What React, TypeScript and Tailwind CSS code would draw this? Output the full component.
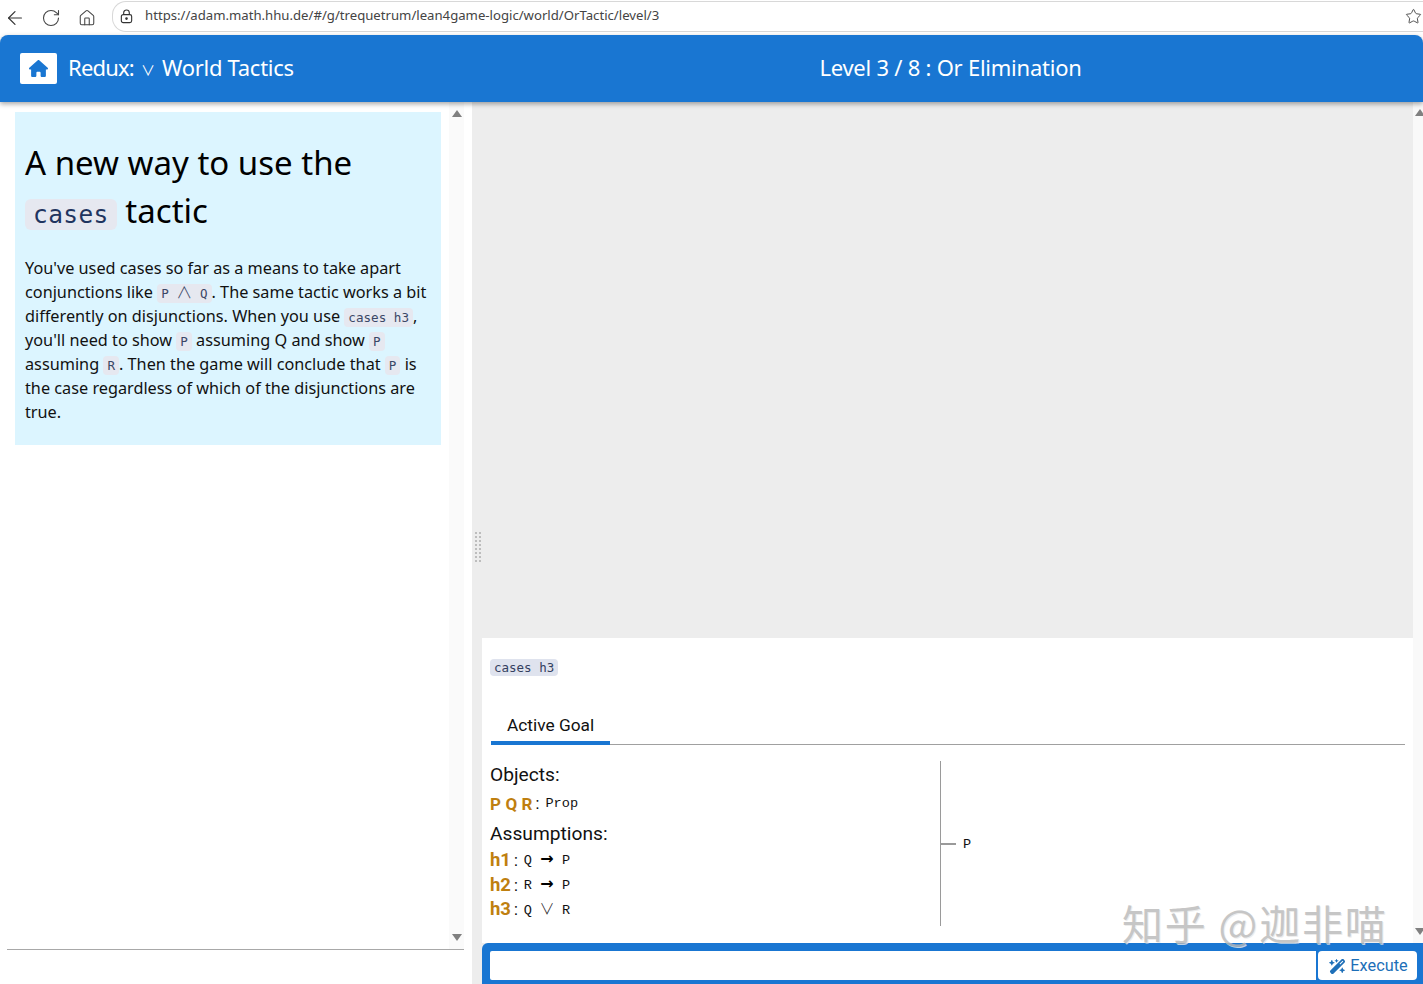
import React from "react";
import { ArrowLeft, RotateCw, Home, Star } from "lucide-react";
import { FaHouse, FaWandMagicSparkles } from "react-icons/fa6";

function Code({ children }: { children: React.ReactNode }) {
  return (
    <code className="bg-[#e6e8f0] text-[#3b4766] rounded-[4px] px-[4px] py-[2px] text-[12.6px] leading-none font-['DejaVu_Sans_Mono',monospace]">
      {children}
    </code>
  );
}

function Arrow() {
  return <span className="inline-block w-[30px] text-center font-bold text-[16px] leading-none font-['DejaVu_Sans',sans-serif] text-black">→</span>;
}
function Or() {
  return <span className="inline-block w-[30px] text-center text-[15px] font-light leading-none font-['Noto_Sans_CJK_SC',sans-serif] text-[#222]">∨</span>;
}

function Hyp({ name, value, wide }: { name: string; value: React.ReactNode; wide?: boolean }) {
  return (
    <div className="flex items-center h-[24.5px]">
      <span className={wide ? "font-bold text-[#bf7f0f] text-[17px] tracking-[0.1px] font-['Roboto',sans-serif]" : "font-bold text-[#bf7f0f] text-[18.5px] font-['Roboto',sans-serif]"}>{name}</span>
      <span className="ml-[3px] mr-[6px] text-[16px] text-black">:</span>
      <span className="font-['Liberation_Mono',monospace] text-[13.6px] text-[#111] whitespace-pre">{value}</span>
    </div>
  );
}

function ArrowUp() {
  return <div className="w-0 h-0 border-x-[5px] border-x-transparent border-b-[7px] border-b-[#808080]" />;
}
function ArrowDown() {
  return <div className="w-0 h-0 border-x-[5px] border-x-transparent border-t-[7px] border-t-[#808080]" />;
}

export default function App() {
  return (
    <div className="relative w-[1423px] h-[984px] overflow-hidden bg-white flex flex-col font-['Noto_Sans',sans-serif] text-[#111]">
      {/* browser bar */}
      <div className="h-[35px] flex items-center bg-white shrink-0">
        <ArrowLeft className="ml-[4px] w-[22px] h-[22px] text-[#333]" strokeWidth={1.3} />
        <RotateCw className="ml-[15px] w-[20px] h-[20px] text-[#444]" strokeWidth={1.3} />
        <Home className="ml-[17px] w-[18px] h-[18px] text-[#444]" strokeWidth={1.4} />
        <div className="ml-[16px] flex-1 h-[31px] -mt-[3px] border border-[#d8d8d8] rounded-l-[14px] border-r-0 flex items-center pl-[6px] pr-[1px]">
          <svg viewBox="0 0 16 16" className="w-[15px] h-[15px] text-[#333]" fill="none" stroke="currentColor" strokeWidth="1.2">
            <rect x="2.5" y="6" width="11" height="8.5" rx="2" />
            <path d="M5 6V4a3 3 0 0 1 6 0v2" />
            <circle cx="8" cy="10.2" r="0.8" fill="currentColor" />
          </svg>
          <span className="ml-[11px] text-[13.16px] text-[#444] whitespace-nowrap">
            https://adam.math.hhu.de/#/g/trequetrum/lean4game-logic/world/OrTactic/level/3
          </span>
          <Star className="ml-auto w-[17px] h-[17px] text-[#444]" strokeWidth={1.3} />
        </div>
      </div>

      {/* header */}
      <header className="relative z-10 h-[67px] shrink-0 bg-[#1976d2] rounded-t-[8px] shadow-[0_2px_5px_rgba(0,0,0,0.35)] flex items-center text-white">
        <div className="w-[473px] shrink-0 flex items-center pl-[20px]">
          <div className="w-[37px] h-[31px] bg-white rounded-[2px] flex items-center justify-center text-[#1976d2]">
            <FaHouse className="w-[19px] h-[17px]" />
          </div>
          <span className="ml-[11px] -mt-[2px] text-[22px] tracking-[-0.8px] whitespace-nowrap">Redux:</span>
          <span className="ml-[7px] w-[14px] text-center text-[14px] font-normal font-['Noto_Sans_CJK_SC',sans-serif] leading-none whitespace-nowrap">∨</span>
          <span className="ml-[7px] -mt-[2px] text-[22px] tracking-[-0.28px] whitespace-nowrap">World Tactics</span>
        </div>
        <div className="flex-1 text-center text-[22px] tracking-[-0.24px] whitespace-nowrap -mt-[2px] ml-[5px]">Level 3 / 8 : Or Elimination</div>
      </header>

      {/* body */}
      <div className="flex-1 flex min-h-0">
        {/* left */}
        <div className="w-[472px] shrink-0 flex flex-col">
          <div className="h-[848px] ml-[7px] mr-[8px] shrink-0 border-b border-[#a8a8a8] flex">
            <div className="flex-1 pl-[8px] pt-[10px]">
              <div className="bg-[#dcf5ff] w-[426px] h-[333px] px-[10px] pt-[27px]">
                <h1 className="text-[33px] leading-[48px] text-black">
                  A new way to use the
                  <br />
                  <code className="bg-[#e6e8f0] text-[#1f3560] rounded-[6px] px-[8px] py-[1px] text-[24.5px] leading-none tracking-[0.4px] font-['DejaVu_Sans_Mono',monospace]">cases</code>{" "}
                  tactic
                </h1>
                <p className="mt-[21px] text-[16.25px] leading-[24px] text-[#111]">
                  You've used cases so far as a means to take apart conjunctions like <Code>P <span className="font-['Noto_Sans_CJK_SC',sans-serif] font-light text-[16px] leading-none">∧</span> Q</Code>. The same tactic
                  works a bit differently on disjunctions. When you use <Code>cases h3</Code>, you'll need to show <Code>P</Code> assuming Q and show <Code>P</Code> assuming <Code>R</Code>. Then the game will conclude that <Code>P</Code> is the case regardless of which of the disjunctions are true.
                </p>
              </div>
            </div>
            <div className="w-[15px] bg-[#fafafa] flex flex-col items-center justify-between pt-[8px] pb-[8px] shrink-0">
              <ArrowUp />
              <ArrowDown />
            </div>
          </div>
        </div>

        {/* right */}
        <div className="flex-1 flex flex-col min-w-0 bg-[#ededed]">
          <div className="flex-1 flex min-h-0">
            <div className="flex-1 flex flex-col min-w-0">
              <div className="relative h-[536px] shrink-0">
                <div className="absolute left-[2px] top-[429px] w-[8px] h-[32px] bg-[radial-gradient(circle,#bdbdbd_1.2px,transparent_1.3px)] bg-[length:4px_4px]" />
              </div>
              <div className="flex-1 ml-[10px] bg-white px-[8px] pt-[16px] flex flex-col">
                <div>
                  <code className="bg-[#dfe3ee] text-[#33405f] rounded-[4px] px-[4px] py-[1px] text-[12.5px] font-['DejaVu_Sans_Mono',monospace]">cases h3</code>
                </div>
                <div className="mt-[35px] ml-[1px] w-[914px] border-b border-[#a0a0a0] h-[32px] flex">
                  <div className="w-[119px] h-[32px] border-b-[4px] border-[#1976d2] pl-[16px] text-[17.3px] leading-[24px] font-['Roboto',sans-serif] text-[#111]">Active Goal</div>
                </div>
                <div className="flex mt-[16px] h-[165px]">
                  <div className="w-[451px] shrink-0 border-r border-[#9a9a9a] pt-[1px] font-['Roboto',sans-serif]">
                    <div className="text-[19.2px] leading-[26px]">Objects:</div>
                    <div className="mt-[4px]">
                      <Hyp wide name="P Q R" value="Prop" />
                    </div>
                    <div className="text-[19.2px] leading-[26px] mt-[4px]">Assumptions:</div>
                    <div className="mt-[2.5px]">
                      <Hyp name="h1" value={<>Q<Arrow />P</>} />
                      <Hyp name="h2" value={<>R<Arrow />P</>} />
                      <Hyp name="h3" value={<>Q<Or />R</>} />
                    </div>
                  </div>
                  <div className="flex items-center self-center mt-[2px]">
                    <div className="w-[15px] h-[2px] bg-[#9a9a9a]" />
                    <span className="ml-[7px] translate-y-[1px] font-['Liberation_Mono',monospace] text-[13.6px]">P</span>
                  </div>
                </div>
              </div>
            </div>
            <div className="w-[10px] bg-[#f9f9f9] shrink-0 flex flex-col items-center justify-between pt-[7px] pb-[8px] pl-[4px]">
              <ArrowUp />
              <ArrowDown />
            </div>
          </div>
          <div className="ml-[10px] h-[41px] bg-[#1976d2] rounded-tl-[6px] shrink-0 flex pl-[8px] pt-[8px] pb-[4px] pr-[6px]">
            <div className="flex-1 bg-white rounded-l-[2px]" />
            <button className="ml-[2px] w-[99px] bg-white rounded-[4px] flex items-center justify-center gap-[4px] pl-[2px] pt-[1px] text-[#1d6fb8] text-[16.3px] font-['Roboto',sans-serif]">
              <FaWandMagicSparkles className="w-[17px] h-[17px]" />
              Execute
            </button>
          </div>
        </div>
      </div>

      {/* watermark */}
      <div className="absolute left-[1122px] top-[895px] text-[41px] leading-[54px] tracking-[1.8px] whitespace-nowrap text-[#b8b8b8] opacity-80 font-['Noto_Sans_CJK_SC',sans-serif] [text-shadow:1px_1px_0_#e8e8e8]">
        知乎 @迦非喵
      </div>
    </div>
  );
}
